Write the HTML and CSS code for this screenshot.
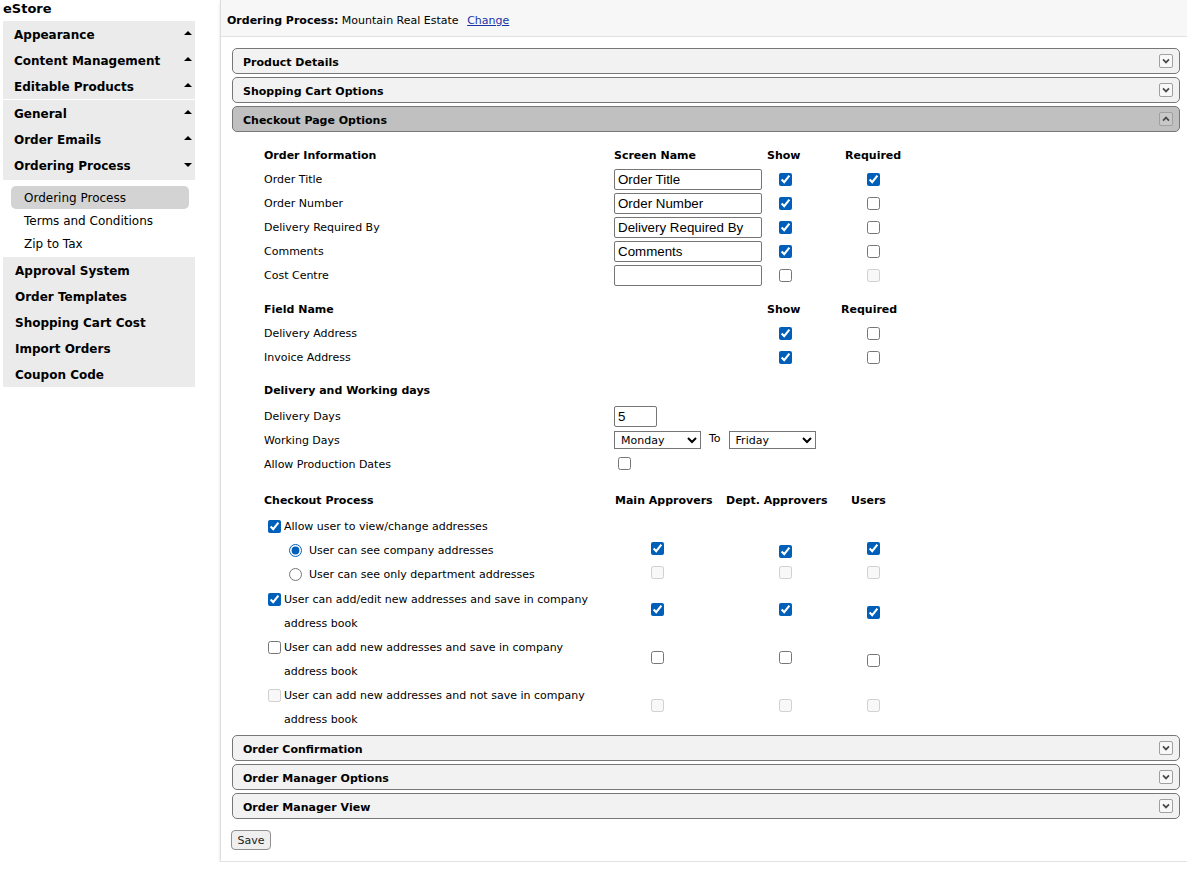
FILE: index.html
```html
<!DOCTYPE html>
<html>
<head>
<meta charset="utf-8">
<title>eStore - Ordering Process</title>
<link rel="stylesheet" href="styles.css">
</head>
<body>
<div class="layout">
  <aside class="sidebar">
    <div class="brand">eStore</div>
    <ul class="group">
      <li class="item up">Appearance</li>
      <li class="item up">Content Management</li>
      <li class="item up">Editable Products</li>
    </ul>
    <ul class="group sep">
      <li class="item up">General</li>
      <li class="item up">Order Emails</li>
      <li class="item down">Ordering Process</li>
    </ul>
    <ul class="sub">
      <li class="sub-item active">Ordering Process</li>
      <li class="sub-item">Terms and Conditions</li>
      <li class="sub-item">Zip to Tax</li>
    </ul>
    <ul class="group plain">
      <li class="item">Approval System</li>
      <li class="item">Order Templates</li>
      <li class="item">Shopping Cart Cost</li>
      <li class="item">Import Orders</li>
      <li class="item">Coupon Code</li>
    </ul>
  </aside>

  <main class="panel">
    <div class="panel-head">
      <b>Ordering Process:</b>&nbsp;Mountain Real Estate <a href="#" class="link">Change</a>
    </div>
    <div class="panel-body">
      <div class="acc-head">
        <span class="acc-title">Product Details</span>
        <span class="acc-icon"><svg viewBox="0 0 14 14" width="14" height="14"><polyline points="3.5,5.2 7,8.7 10.5,5.2" fill="none" stroke="#4a4a4a" stroke-width="2"/></svg></span>
      </div>
      <div class="acc-head">
        <span class="acc-title">Shopping Cart Options</span>
        <span class="acc-icon"><svg viewBox="0 0 14 14" width="14" height="14"><polyline points="3.5,5.2 7,8.7 10.5,5.2" fill="none" stroke="#4a4a4a" stroke-width="2"/></svg></span>
      </div>
      <div class="acc-head open">
        <span class="acc-title">Checkout Page Options</span>
        <span class="acc-icon"><svg viewBox="0 0 14 14" width="14" height="14"><polyline points="3.5,8.8 7,5.3 10.5,8.8" fill="none" stroke="#4a4a4a" stroke-width="2"/></svg></span>
      </div>

      <div class="acc-content">
        <section class="sec">
          <div class="row r4 head">
            <span>Order Information</span><span>Screen Name</span><span>Show</span><span>Required</span>
          </div>
          <div class="row r4">
            <span>Order Title</span>
            <span><input class="txt" type="text" value="Order Title"></span>
            <span class="c-show"><input class="cb" type="checkbox" checked></span>
            <span class="c-req"><input class="cb" type="checkbox" checked></span>
          </div>
          <div class="row r4">
            <span>Order Number</span>
            <span><input class="txt" type="text" value="Order Number"></span>
            <span class="c-show"><input class="cb" type="checkbox" checked></span>
            <span class="c-req"><input class="cb" type="checkbox"></span>
          </div>
          <div class="row r4">
            <span>Delivery Required By</span>
            <span><input class="txt" type="text" value="Delivery Required By"></span>
            <span class="c-show"><input class="cb" type="checkbox" checked></span>
            <span class="c-req"><input class="cb" type="checkbox"></span>
          </div>
          <div class="row r4">
            <span>Comments</span>
            <span><input class="txt" type="text" value="Comments"></span>
            <span class="c-show"><input class="cb" type="checkbox" checked></span>
            <span class="c-req"><input class="cb" type="checkbox"></span>
          </div>
          <div class="row r4">
            <span>Cost Centre</span>
            <span><input class="txt" type="text" value=""></span>
            <span class="c-show"><input class="cb" type="checkbox"></span>
            <span class="c-req"><input class="cb" type="checkbox" disabled></span>
          </div>
        </section>

        <section class="sec s2">
          <div class="row r4 head">
            <span>Field Name</span><span></span><span>Show</span><span class="req2">Required</span>
          </div>
          <div class="row r4">
            <span>Delivery Address</span><span></span>
            <span class="c-show"><input class="cb" type="checkbox" checked></span>
            <span class="c-req"><input class="cb" type="checkbox"></span>
          </div>
          <div class="row r4">
            <span>Invoice Address</span><span></span>
            <span class="c-show"><input class="cb" type="checkbox" checked></span>
            <span class="c-req"><input class="cb" type="checkbox"></span>
          </div>
        </section>

        <section class="sec s3">
          <div class="row r2 head"><span>Delivery and Working days</span></div>
          <div class="row r2 tall">
            <span class="tall-label">Delivery Days</span>
            <span><input class="txt days" type="text" value="5"></span>
          </div>
          <div class="row r2">
            <span>Working Days</span>
            <span class="days-range">
              <select class="sel"><option>Monday</option><option>Tuesday</option><option>Wednesday</option><option>Thursday</option><option>Friday</option><option>Saturday</option><option>Sunday</option></select>
              <span class="to">To</span>
              <select class="sel"><option>Friday</option><option>Monday</option><option>Tuesday</option><option>Wednesday</option><option>Thursday</option><option>Saturday</option><option>Sunday</option></select>
            </span>
          </div>
          <div class="row r2">
            <span>Allow Production Dates</span>
            <span><input class="cb prod" type="checkbox"></span>
          </div>
        </section>

        <section class="sec s4">
          <div class="cp-head head">
            <span class="cp-h0">Checkout Process</span>
            <span class="cp-h1">Main Approvers</span>
            <span class="cp-h2">Dept. Approvers</span>
            <span>Users</span>
          </div>
          <div class="cp-row first">
            <label class="opt"><input class="cb" type="checkbox" checked><span>Allow user to view/change addresses</span></label>
          </div>
          <div class="cp-row">
            <label class="opt radio"><input class="rd" type="radio" name="scope" checked><span>User can see company addresses</span></label>
            <span class="ca up"><input class="cb" type="checkbox" checked></span>
            <span class="cb-col"><input class="cb" type="checkbox" checked></span>
            <span class="cc up"><input class="cb" type="checkbox" checked></span>
          </div>
          <div class="cp-row">
            <label class="opt radio"><input class="rd" type="radio" name="scope"><span>User can see only department addresses</span></label>
            <span class="ca up"><input class="cb" type="checkbox" disabled></span>
            <span class="cb-col up"><input class="cb" type="checkbox" disabled></span>
            <span class="cc up"><input class="cb" type="checkbox" disabled></span>
          </div>
          <div class="cp-row gap1">
            <label class="opt"><input class="cb" type="checkbox" checked><span>User can add/edit new addresses and save in company address book</span></label>
            <span class="ca up"><input class="cb" type="checkbox" checked></span>
            <span class="cb-col up"><input class="cb" type="checkbox" checked></span>
            <span class="cc"><input class="cb" type="checkbox" checked></span>
          </div>
          <div class="cp-row">
            <label class="opt"><input class="cb" type="checkbox"><span>User can add new addresses and save in company address book</span></label>
            <span class="ca up"><input class="cb" type="checkbox"></span>
            <span class="cb-col up"><input class="cb" type="checkbox"></span>
            <span class="cc"><input class="cb" type="checkbox"></span>
          </div>
          <div class="cp-row">
            <label class="opt"><input class="cb" type="checkbox" disabled><span>User can add new addresses and not save in company address book</span></label>
            <span class="ca up"><input class="cb" type="checkbox" disabled></span>
            <span class="cb-col up"><input class="cb" type="checkbox" disabled></span>
            <span class="cc up"><input class="cb" type="checkbox" disabled></span>
          </div>
        </section>
      </div>

      <div class="acc-head">
        <span class="acc-title">Order Confirmation</span>
        <span class="acc-icon"><svg viewBox="0 0 14 14" width="14" height="14"><polyline points="3.5,5.2 7,8.7 10.5,5.2" fill="none" stroke="#4a4a4a" stroke-width="2"/></svg></span>
      </div>
      <div class="acc-head">
        <span class="acc-title">Order Manager Options</span>
        <span class="acc-icon"><svg viewBox="0 0 14 14" width="14" height="14"><polyline points="3.5,5.2 7,8.7 10.5,5.2" fill="none" stroke="#4a4a4a" stroke-width="2"/></svg></span>
      </div>
      <div class="acc-head">
        <span class="acc-title">Order Manager View</span>
        <span class="acc-icon"><svg viewBox="0 0 14 14" width="14" height="14"><polyline points="3.5,5.2 7,8.7 10.5,5.2" fill="none" stroke="#4a4a4a" stroke-width="2"/></svg></span>
      </div>

      <button class="save" type="button">Save</button>
    </div>
  </main>
</div>
</body>
</html>
```

FILE: styles.css
```css
* { box-sizing: border-box; }
html, body { margin: 0; padding: 0; background: #fff; }
body {
  font-family: Verdana, "DejaVu Sans", sans-serif;
  font-size: 11px;
  color: #000;
}
ul { list-style: none; margin: 0; padding: 0; }

.layout { display: flex; align-items: flex-start; }

/* Sidebar */
.sidebar { width: 192px; margin-left: 3px; flex: none; }
.brand { font-weight: bold; font-size: 13px; height: 21px; line-height: 18px; }
.group { background: #ebebeb; }
.group.sep { margin-top: 1px; padding-bottom: 2px; }
.item {
  height: 26px; line-height: 24px; padding-top: 2px;
  padding-left: 11px;
  font-weight: bold; font-size: 12px;
  position: relative;
}
.group.plain .item { padding-left: 12px; }
.item.up::after, .item.down::after {
  content: ""; position: absolute; right: 3px; top: 10px;
  border-left: 4px solid transparent; border-right: 4px solid transparent;
}
.item.up::after { border-bottom: 4px solid #000; }
.item.down::after { border-top: 4px solid #000; top: 11px; }
.sub { padding: 6px 0 2px 8px; }
.sub-item {
  width: 178px; height: 23px; line-height: 21px; padding-top: 2px;
  padding-left: 13px; font-size: 12px; border-radius: 5px;
}
.sub-item.active { background: #d3d3d3; }

/* Panel */
.panel {
  flex: 1; margin-left: 25px;
  border-left: 1px solid #dedede;
  border-bottom: 1px solid #e2e2e2;
  box-shadow: 0 2px 3px rgba(0,0,0,0.12);
}
.panel-head {
  height: 37px; border-bottom: 1px solid #e2e2e2;
  background: #f7f7f7;
  display: flex; align-items: center; padding: 5px 0 0 6px;
  white-space: pre;
}
.link { color: #1a33a6; margin-left: 5px; }
.panel-body { padding: 11px 7px 11px 11px; }

.acc-head {
  height: 26px; margin-bottom: 3px;
  border: 1px solid #777; border-radius: 5px;
  background: #f2f2f2;
  display: flex; align-items: center; justify-content: space-between;
  padding: 0 6px 0 10px; font-weight: bold;
}
.acc-title { padding-top: 2px; }
.acc-head.open { background: #c0c0c0; margin-bottom: 0; }
.acc-icon {
  width: 14px; height: 14px; border: 1px solid #a0a0a0; border-radius: 2px;
  background: #f8f8f8; display: flex; align-items: center; justify-content: center;
}
.acc-icon svg { width: 12px; height: 12px; }
.open .acc-icon { background: #c8c8c8; }

.acc-content { padding: 11px 0 3px 32px; }

.head { font-weight: bold; }
.sec.s2 { margin-top: 10px; }
.sec.s3 { margin-top: 9px; }
.sec.s4 { margin-top: 12px; }

.row { display: grid; align-items: center; height: 24px; }
.r4 { grid-template-columns: 350px 153px 78px 1fr; }
.r2 { grid-template-columns: 350px 1fr; }
.row.tall { height: 26px; }
.row.tall .days { align-self: end; }
.tall-label { padding-top: 2px; }
.req2 { margin-left: -4px; }
.c-show, .c-req, .ca, .cb-col, .cc { display: flex; align-items: center; }

.cb { width: 13px; height: 13px; margin: 0; accent-color: #005fb8; }
.rd { width: 13px; height: 13px; margin: 0; accent-color: #005fb8; }
.c-show .cb { margin-left: 12px; }
.c-req .cb { margin-left: 22px; }
.prod { margin-left: 4px; margin-top: 1px; }

.txt {
  width: 148px; height: 21px; margin: 0;
  border: 1px solid #767676; border-radius: 2px;
  padding: 1px 3px;
  font-family: Arial, "Liberation Sans", sans-serif; font-size: 13.33px; color: #000;
  display: block;
}
.txt.days { width: 43px; margin-top: 3px; }
.days-range { display: flex; align-items: center; }
.sel {
  width: 87px; height: 18px; margin: 0;
  font-family: Verdana, "DejaVu Sans", sans-serif; font-size: 11px;
  border: 1px solid #767676; background: #fff; color: #000; padding: 0 2px;
}
.to { margin: -3px 8px 0 8px; }

.cp-head { display: flex; height: 24px; align-items: center; }
.cp-h0 { width: 351px; }
.cp-h1 { width: 111px; }
.cp-h2 { width: 125px; }

.cp-row { display: grid; grid-template-columns: 350px 129px 87px 1fr; align-items: center; }
.cp-row.first { margin-top: 3px; }
.cp-row.gap1 { margin-top: 1px; }
.opt { display: flex; align-items: flex-start; line-height: 24px; padding-right: 12px; }
.opt .cb { margin: 5px 3px 0 4px; flex: none; }
.opt.radio { padding-left: 20px; }
.opt .rd { margin: 5px 7px 0 5px; flex: none; }
.ca .cb { margin-left: 37px; }
.cb-col .cb { margin-left: 36px; }
.cc .cb { margin-left: 37px; }
.ca.up, .cb-col.up, .cc.up { margin-top: -6px; }

.save {
  display: block; margin: 11px 0 0 -1px;
  width: 40px; height: 20px; padding: 0;
  border: 1px solid #8f8f8f; border-radius: 4px;
  background: #efefef;
  font-family: Verdana, "DejaVu Sans", sans-serif; font-size: 11px; color: #222;
}
```
